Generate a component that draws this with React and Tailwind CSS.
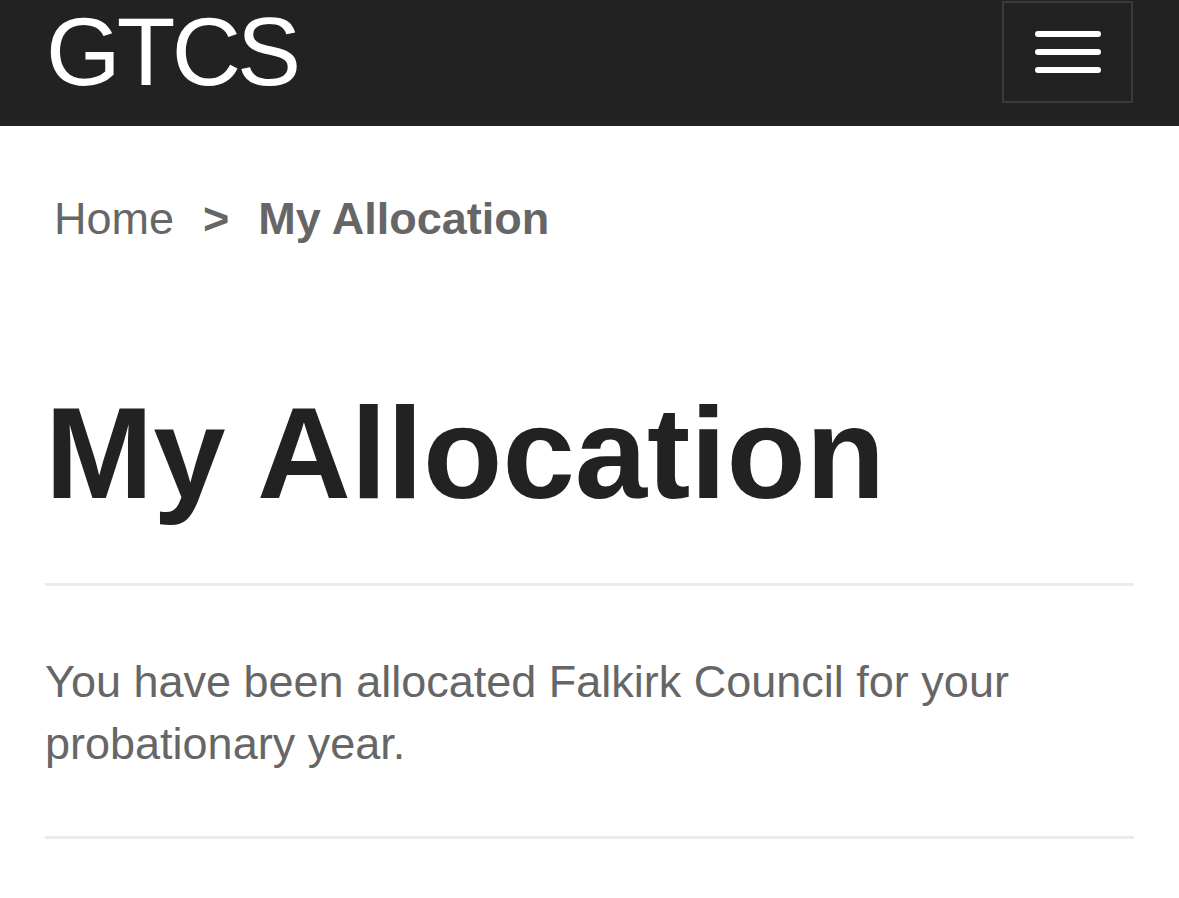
export default function App() {
  return (
    <div className="min-h-screen bg-white" style={{ fontFamily: '"Liberation Sans", Arial, sans-serif' }}>
      {/* ── Header ─────────────────────────────────────────── */}
      <header className="h-[126px] bg-[#222222] flex items-start justify-between pl-[46px] pr-[46px]">
        <div className="mt-[4px] text-white text-[96px] leading-none tracking-[-0.04em]">GTCS</div>
        <button
          type="button"
          className="mt-px w-[131px] h-[102px] border-2 border-[#3a3a3a] flex flex-col items-center justify-center gap-3"
        >
          <span className="block w-[66px] h-[6px] rounded-full bg-white" />
          <span className="block w-[66px] h-[6px] rounded-full bg-white" />
          <span className="block w-[66px] h-[6px] rounded-full bg-white" />
        </button>
      </header>

      <main className="px-[45px]">
        {/* ── Breadcrumb ───────────────────────────────────── */}
        <nav className="pt-[66px] pl-[9px] flex items-center text-[45px] leading-[53px] text-[#666666]">
          <a href="#">Home</a>
          <span className="font-bold ml-[29px] mr-[29px]">&gt;</span>
          <span className="font-bold">My Allocation</span>
        </nav>

        {/* ── Title ────────────────────────────────────────── */}
        <h1 className="mt-[143px] text-[130px] leading-none font-bold text-[#222222]">My Allocation</h1>

        <hr className="mt-[65px] border-0 h-[3px] bg-[#ebebeb]" />

        <p className="mt-[65px] text-[45px] leading-[62px] text-[#666666]">
          You have been allocated Falkirk Council for your probationary year.
        </p>

        <hr className="mt-[61px] border-0 h-[3px] bg-[#ebebeb]" />
      </main>
    </div>
  )
}
